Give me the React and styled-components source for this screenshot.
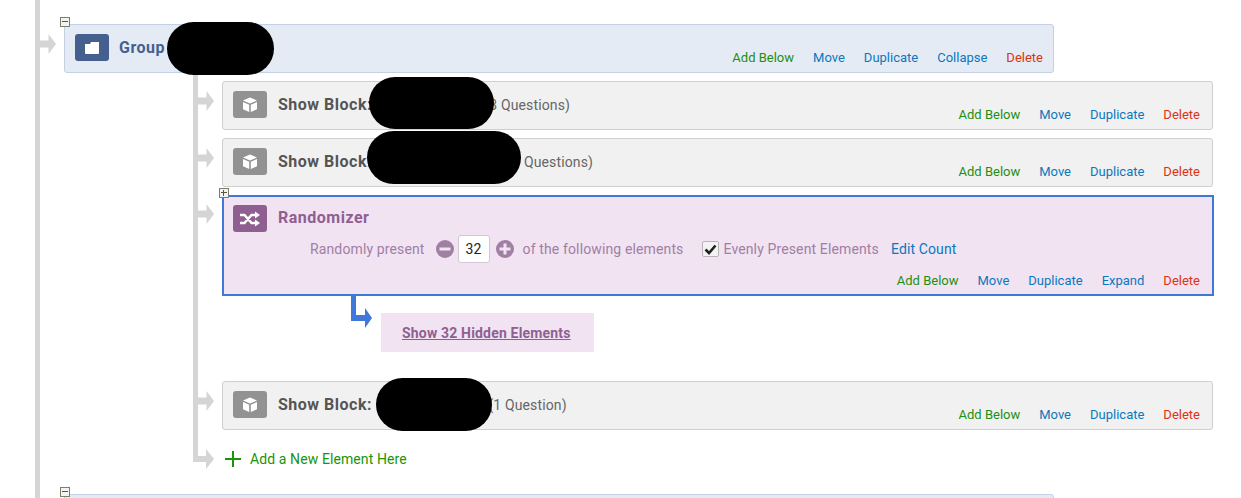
import React from 'react';
import styled, { createGlobalStyle } from 'styled-components';

const GlobalStyle = createGlobalStyle`
  html, body {
    margin: 0;
    padding: 0;
    background: #fff;
    font-family: Roboto, "Liberation Sans", sans-serif;
  }
`;

const Page = styled.div`
  width: 1241px;
  height: 498px;
  overflow: hidden;
  box-sizing: border-box;
`;

const Flow = styled.div`
  margin-left: 35px;
  padding-top: 24px;
  border-left: 5px solid #d5d5d5;
  min-height: 600px;
`;

const Row = styled.div`
  display: flex;
  flex: none;
  align-items: flex-start;
`;

const Connector = styled.svg`
  flex: none;
  width: 16px;
  height: 20px;
  margin-top: ${p => p.$top}px;
  margin-right: ${p => p.$gap}px;
`;

const Card = styled.div`
  position: relative;
  flex: none;
  box-sizing: border-box;
  width: ${p => p.$width}px;
  min-height: 49px;
  padding: 9px ${p => p.$right}px 6px 10px;
  display: flex;
  border: 1px solid ${p => p.$border};
  border-radius: 3px;
  background: ${p => p.$bg};
`;

const RandomCard = styled(Card)`
  flex-direction: column;
  width: 992px;
  height: 101px;
  padding: 8px 12px 5px 9px;
  border-width: 2px;
  border-radius: 0;
`;

const IconBox = styled.div`
  flex: none;
  width: 34px;
  height: 27px;
  border-radius: 3px;
  display: flex;
  align-items: center;
  justify-content: center;
  background: ${p => p.$bg};
`;

const Title = styled.div`
  margin-left: ${p => p.$indent}px;
  margin-top: ${p => p.$lift || 0}px;
  font-size: 16px;
  font-weight: 700;
  letter-spacing: 0.5px;
  line-height: 27px;
  white-space: nowrap;
  color: ${p => p.$color};
`;

const Count = styled.span`
  font-size: 14px;
  font-weight: 400;
  letter-spacing: 0.13px;
  color: #666;
`;

const Gap = styled.span`
  display: inline-block;
  width: ${p => p.$width}px;
`;

const Actions = styled.div`
  margin-left: auto;
  align-self: flex-end;
  display: flex;
  gap: 19px;
  font-size: 13px;
  line-height: 16px;
`;

const Action = styled.span`
  color: ${p => p.$color};
`;

const Toggle = styled.div`
  position: absolute;
  box-sizing: border-box;
  left: ${p => p.$left}px;
  top: ${p => p.$top}px;
  width: 10px;
  height: 10px;
  border: 1px solid #77806a;
  background: #f3f4ef;
  &::before {
    content: '';
    position: absolute;
    left: 1px;
    right: 1px;
    top: 3px;
    height: 1px;
    background: #555;
  }
  &::after {
    content: '';
    display: ${p => (p.$plus ? 'block' : 'none')};
    position: absolute;
    top: 1px;
    bottom: 1px;
    left: 3px;
    width: 1px;
    background: #555;
  }
`;

const Redaction = styled.div`
  position: absolute;
  left: ${p => p.$left}px;
  top: ${p => p.$top}px;
  width: ${p => p.$width}px;
  height: ${p => p.$height}px;
  border-radius: 27px;
  background: #000;
`;

const Children = styled.div`
  margin-left: 153px;
  border-left: 5px solid #d5d5d5;
  padding-top: 8px;
  height: 389px;
  box-sizing: border-box;
  display: flex;
  flex-direction: column;
  gap: 8px;
`;

const Head = styled.div`
  display: flex;
`;

const Config = styled.div`
  display: flex;
  align-items: center;
  height: 28px;
  margin-top: 3px;
  margin-left: 77px;
  font-size: 14px;
  letter-spacing: 0.13px;
  color: #a07fa3;
  white-space: nowrap;
`;

const RoundButton = styled.svg`
  flex: none;
  width: 18px;
  height: 18px;
  margin: 0 ${p => p.$right}px 0 ${p => p.$left}px;
`;

const NumberBox = styled.div`
  box-sizing: border-box;
  width: 32px;
  height: 28px;
  border: 1px solid #d3c6d5;
  border-radius: 3px;
  background: #fff;
  color: #222;
  font-size: 14px;
  line-height: 26px;
  text-align: center;
`;

const Check = styled.div`
  box-sizing: border-box;
  width: 17px;
  height: 16px;
  margin: 0 4px 0 19px;
  border: 1px solid #b9b2ba;
  border-radius: 2px;
  background: #f4f3f4;
  display: flex;
  align-items: center;
  justify-content: center;
`;

const EditLink = styled.span`
  margin-left: 12px;
  color: #0b78bd;
`;

const RandomActions = styled(Actions)`
  margin-top: auto;
`;

const HiddenRow = styled.div`
  display: flex;
  flex: none;
  height: 77px;
  margin-top: -8px;
  margin-left: 153px;
`;

const Elbow = styled.svg`
  flex: none;
  width: 21px;
  height: 36px;
  margin-right: 9px;
`;

const HiddenBox = styled.div`
  box-sizing: border-box;
  width: 213px;
  height: 39px;
  margin-top: 17px;
  padding-left: 21px;
  background: #f1e3f2;
  color: #8f5f92;
  font-size: 14px;
  font-weight: 700;
  letter-spacing: 0.18px;
  line-height: 40px;
  text-decoration: underline;
`;

const AddRow = styled.div`
  display: flex;
  flex: none;
  align-items: center;
  margin-top: 5px;
  margin-left: -5px;
  color: #1a9408;
  font-size: 14px;
  letter-spacing: 0.1px;
`;

const AddElbow = styled.svg`
  flex: none;
  width: 21px;
  height: 32px;
  margin-right: 10px;
`;

const AddText = styled.span`
  margin-left: 8px;
`;

const NextGroup = styled(Row)`
  margin-top: 32px;
`;

const Stem = ({ gap, top = 10 }) => (
  <Connector $gap={gap} $top={top} viewBox="0 0 16 20">
    <path d="M0 6.500h8.500V0l7.500 10-7.500 10v-6.500H0z" fill="#d5d5d5" />
  </Connector>
);

const FolderIcon = () => (
  <svg width="16" height="14" viewBox="0 0 16 14">
    <path d="M1 3h5l1-2h8v11a1 1 0 0 1-1 1H2a1 1 0 0 1-1-1z" fill="#fff" />
  </svg>
);

const CubeIcon = () => (
  <svg width="16" height="16" viewBox="0 0 16 16">
    <path d="M8 .5l7 3-7 3-7-3z" fill="#fff" />
    <path d="M1 5l6.200 2.700V15L1 12.200zM15 5L8.800 7.700V15l6.200-2.800z" fill="#fff" />
  </svg>
);

const ShuffleIcon = () => (
  <svg width="22" height="16" viewBox="0 0 22 16" fill="none">
    <path d="M1 4h4.500l7 8H17M1 12h4.500l7-8H17" stroke="#fff" strokeWidth="2.400" />
    <path d="M16 .5L21 4l-5 3.500zM16 8.500L21 12l-5 3.500z" fill="#fff" />
  </svg>
);

const Links = ({ middle }) => (
  <>
    <Action $color="#1f8f0f">Add Below</Action>
    <Action $color="#0b78bd">Move</Action>
    <Action $color="#0b78bd">Duplicate</Action>
    {middle && <Action $color="#0b78bd">{middle}</Action>}
    <Action $color="#dd3311">Delete</Action>
  </>
);

const BlockRow = ({ gapWidth, count, blob }) => (
  <Row>
    <Stem gap={8} />
    <Card $width={991} $right={12} $bg="#f1f1f1" $border="#cfcfcf">
      <IconBox $bg="#929292"><CubeIcon /></IconBox>
      <Title $indent={11} $color="#555">
        Show Block: <Gap $width={gapWidth} /><Count>{count}</Count>
      </Title>
      <Actions><Links /></Actions>
      <Redaction {...blob} />
    </Card>
  </Row>
);

export default function App() {
  return (
    <Page>
      <GlobalStyle />
      <Flow>
        <Row>
          <Stem gap={8} />
          <Card $width={990} $right={10} $bg="#e5ebf5" $border="#c4d0e3">
            <IconBox $bg="#45608f"><FolderIcon /></IconBox>
            <Title $indent={10} $color="#45608f">Group</Title>
            <Actions><Links middle="Collapse" /></Actions>
            <Toggle $left={-5} $top={-8} />
            <Redaction $left={102} $top={-3} $width={107} $height={53} />
          </Card>
        </Row>
        <Children>
          <BlockRow gapWidth={108} count="(3 Questions)" blob={{ $left: 146, $top: -5, $width: 125, $height: 52 }} />
          <BlockRow gapWidth={131} count="(7 Questions)" blob={{ $left: 144, $top: -8, $width: 154, $height: 53 }} />
          <Row>
            <Stem gap={8} top={9} />
            <RandomCard $bg="#f1e3f2" $border="#3f78d8">
              <Head>
                <IconBox $bg="#8f5f92"><ShuffleIcon /></IconBox>
                <Title $indent={11} $lift={-1} $color="#8f5f92">Randomizer</Title>
              </Head>
              <Config>
                Randomly present
                <RoundButton $left={11} $right={4} viewBox="0 0 18 18">
                  <circle cx="9" cy="9" r="9" fill="#a07fa3" />
                  <path d="M3.500 7.500h11v3h-11z" fill="#f1e3f2" />
                </RoundButton>
                <NumberBox>32</NumberBox>
                <RoundButton $left={6} $right={9} viewBox="0 0 18 18">
                  <circle cx="9" cy="9" r="9" fill="#a07fa3" />
                  <path d="M7.500 3.500h3v4h4v3h-4v4h-3v-4h-4v-3h4z" fill="#f1e3f2" />
                </RoundButton>
                of the following elements
                <Check>
                  <svg width="13" height="11" viewBox="0 0 13 11">
                    <path d="M1.500 5.500l3.500 3.500 6.500-7.500" fill="none" stroke="#222" strokeWidth="2.600" />
                  </svg>
                </Check>
                Evenly Present Elements
                <EditLink>Edit Count</EditLink>
              </Config>
              <RandomActions><Links middle="Expand" /></RandomActions>
              <Toggle $plus $left={-5} $top={-9} />
            </RandomCard>
          </Row>
          <HiddenRow>
            <Elbow viewBox="0 0 21 36">
              <path d="M0 0h5v19h9v-7l7 10-7 10v-7H0z" fill="#3f78d8" />
            </Elbow>
            <HiddenBox>Show 32 Hidden Elements</HiddenBox>
          </HiddenRow>
          <Row>
            <Stem gap={8} />
            <Card $width={991} $right={12} $bg="#f1f1f1" $border="#cfcfcf">
              <IconBox $bg="#929292"><CubeIcon /></IconBox>
              <Title $indent={11} $color="#555">
                Show Block: <Gap $width={112} /><Count>(1 Question)</Count>
              </Title>
              <Actions><Links /></Actions>
              <Redaction $left={153} $top={-4} $width={116} $height={53} />
            </Card>
          </Row>
          <AddRow>
            <AddElbow viewBox="0 0 21 32">
              <path d="M0 0h5v13h8V6l8 10-8 10v-7H0z" fill="#d5d5d5" />
            </AddElbow>
            <svg width="18" height="18" viewBox="0 0 18 18">
              <path d="M8 1h2v7h7v2h-7v7H8v-7H1V8h7z" fill="#1a9408" />
            </svg>
            <AddText>Add a New Element Here</AddText>
          </AddRow>
        </Children>
        <NextGroup>
          <Stem gap={8} />
          <Card $width={990} $right={10} $bg="#e5ebf5" $border="#c4d0e3">
            <Toggle $left={-5} $top={-8} />
          </Card>
        </NextGroup>
      </Flow>
    </Page>
  );
}
